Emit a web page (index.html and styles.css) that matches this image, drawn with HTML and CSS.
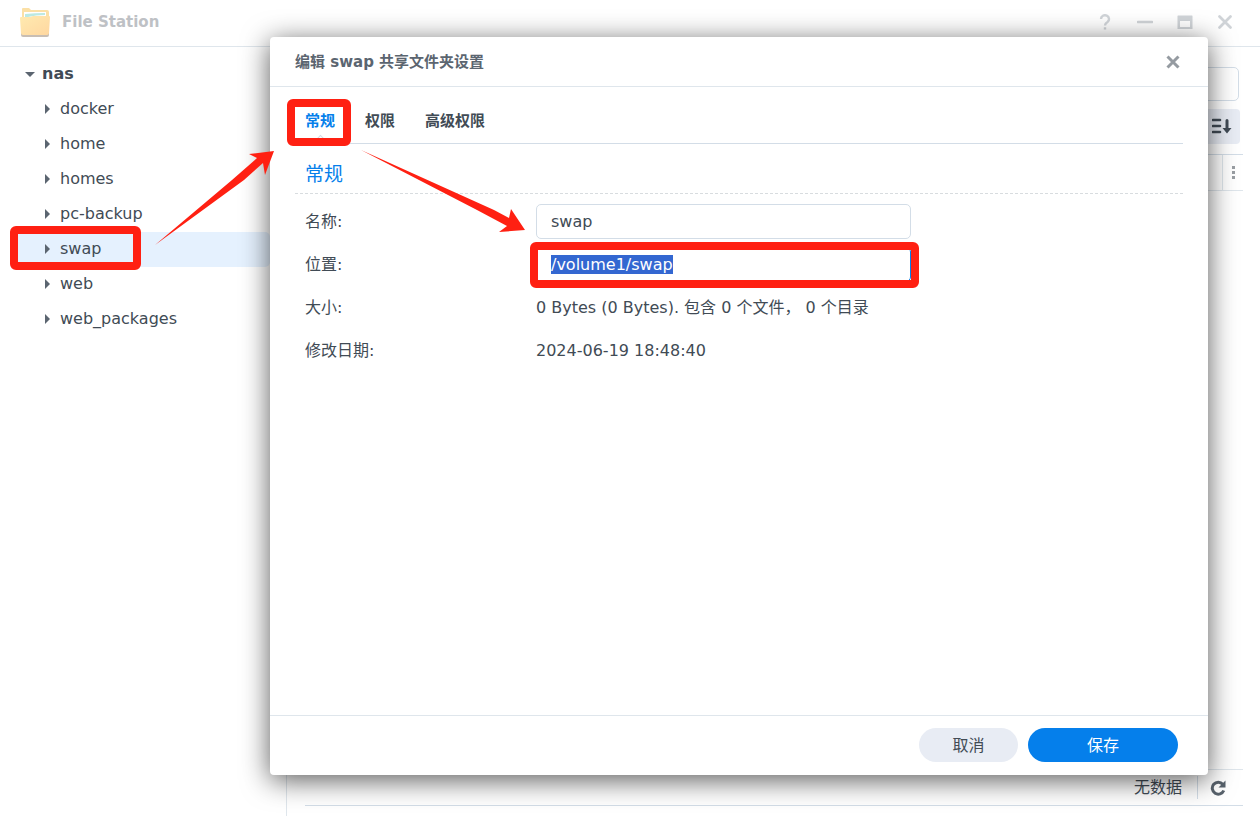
FILE: index.html
```html
<!DOCTYPE html>
<html lang="zh-CN">
<head>
    <meta charset="UTF-8">
    <meta name="viewport" content="width=device-width, initial-scale=1.0">
    <title>File Station</title>
    <link rel="stylesheet" href="styles.css">
</head>
<body>

    <header class="titlebar">
        <svg class="app-icon" width="30" height="30" viewBox="0 0 30 30" aria-hidden="true">
            <defs>
                <linearGradient id="folder" x1="0" y1="0" x2="1" y2="1">
                    <stop offset="0" stop-color="#ffeab0"/>
                    <stop offset="1" stop-color="#ffd7a0"/>
                </linearGradient>
            </defs>
            <path d="M2 2q0-1 1-1h6l2 2h16q2 0 2 2v8H2z" fill="#fbe0a6"/>
            <path d="M4 5h22v6H4z" fill="#fff"/>
            <path d="M5 7q10-1 20-1v4H5z" fill="#bce9e2"/>
            <path d="M8 10q8-2 17-2v3H8z" fill="#fff"/>
            <path d="M1 25h28v3a2 2 0 0 1-2 2H3a2 2 0 0 1-2-2z" fill="#c8beb4"/>
            <path d="M0 11q0-1 1-1h9l3-1h16q1 0 1 1l-1 16q0 2-2 2H3q-2 0-2-2z" fill="url(#folder)"/>
        </svg>
        <h1 class="app-name">File Station</h1>
        <div class="window-tools">
            <button type="button" class="tool" aria-label="帮助">
                <svg width="16" height="16" viewBox="0 0 16 16"><path d="M4 5a4 3.800 0 1 1 6.500 3Q8 9.500 8 11.500M8 13.200v2.300" fill="none" stroke="currentColor" stroke-width="2.400"/></svg>
            </button>
            <button type="button" class="tool" aria-label="最小化">
                <svg width="16" height="16" viewBox="0 0 16 16"><path d="M1 8h14" stroke="currentColor" stroke-width="2.600" stroke-linecap="round"/></svg>
            </button>
            <button type="button" class="tool" aria-label="最大化">
                <svg width="16" height="16" viewBox="0 0 16 16"><path d="M1 1.500h14q.5 0 .5.500v13H.5V2q0-.5.500-.5zM3 7v6h10V7z" fill="currentColor" fill-rule="evenodd"/></svg>
            </button>
            <button type="button" class="tool" aria-label="关闭">
                <svg width="16" height="16" viewBox="0 0 16 16"><path d="M2.500 2.500l11 11M13.500 2.500l-11 11" stroke="currentColor" stroke-width="2.800" stroke-linecap="round"/></svg>
            </button>
        </div>
    </header>

    <div class="workspace">
        <nav class="sidebar">
            <a class="node root" href="#"><span class="arrow-down"></span>nas</a>
            <a class="node" href="#"><span class="arrow-right"></span>docker</a>
            <a class="node" href="#"><span class="arrow-right"></span>home</a>
            <a class="node" href="#"><span class="arrow-right"></span>homes</a>
            <a class="node" href="#"><span class="arrow-right"></span>pc-backup</a>
            <a class="node selected" href="#"><span class="arrow-right"></span>swap</a>
            <a class="node" href="#"><span class="arrow-right"></span>web</a>
            <a class="node" href="#"><span class="arrow-right"></span>web_packages</a>
        </nav>

        <main class="content">
            <div class="toolbar">
                <input class="search" type="text" aria-label="搜索">
            </div>
            <div class="toolbar">
                <button type="button" class="sort" aria-label="排序">
                    <svg width="20" height="16" viewBox="0 0 20 16"><path d="M1 2h7M1 8h7M1 14h7" stroke="currentColor" stroke-width="2.600" stroke-linecap="round"/><path d="M13.500 2.500q0-1.500 1.500-1.500t1.500 1.500V10H19.500L15 15.500 10.500 10h3z" fill="currentColor"/></svg>
                </button>
            </div>
            <div class="list-head">
                <button type="button" class="columns" aria-label="列">
                    <svg width="3" height="13" viewBox="0 0 3 13"><path d="M0 0h3v3H0zM0 5h3v3H0zM0 10h3v3H0z" fill="#999ea3"/></svg>
                </button>
            </div>
            <div class="list"></div>
            <footer class="status">
                <span class="status-text">无数据</span>
                <button type="button" class="refresh" aria-label="刷新">
                    <svg width="16" height="16" viewBox="0 0 16 16"><path d="M12.800 4.200A6 6 0 1 0 13.800 10.500" fill="none" stroke="currentColor" stroke-width="3"/><path d="M15.500.5V7.500H8.500z" fill="currentColor"/></svg>
                </button>
            </footer>
        </main>
    </div>

    <section class="dialog" role="dialog" aria-labelledby="dialog-title">
        <div class="dialog-head">
            <h2 id="dialog-title" class="dialog-title">编辑 swap 共享文件夹设置</h2>
            <button type="button" class="close" aria-label="关闭">
                <svg width="14" height="14" viewBox="0 0 14 14"><path d="M1.500 1.500l11 11M12.500 1.500l-11 11" stroke="currentColor" stroke-width="3"/></svg>
            </button>
        </div>

        <form id="settings" class="dialog-body">
            <div class="tabs">
                <button type="button" class="tab active">常规</button>
                <button type="button" class="tab">权限</button>
                <button type="button" class="tab">高级权限</button>
            </div>
            <h3 class="section-title">常规</h3>
            <div class="fields">
                <label for="name">名称:</label>
                <input class="field" type="text" id="name" value="swap">
                <label for="location">位置:</label>
                <input class="field" type="text" id="location" value="/volume1/swap" readonly>
                <span>大小:</span>
                <span>0 Bytes (0 Bytes). 包含 0 个文件， 0 个目录</span>
                <span>修改日期:</span>
                <span>2024-06-19 18:48:40</span>
            </div>
        </form>

        <div class="dialog-foot">
            <button type="button" class="btn cancel">取消</button>
            <button type="submit" form="settings" class="btn save">保存</button>
        </div>
    </section>

    <!-- step markers -->
    <svg class="markers" aria-hidden="true">
        <g fill="none" stroke="#ff2012" stroke-width="8">
            <rect x="14" y="230" width="123" height="36" rx="2"/>
            <rect x="291" y="103" width="56" height="39" rx="2"/>
            <rect x="534" y="246" width="381" height="38" rx="2"/>
        </g>
        <g fill="#ff2012">
            <path d="M155 245L232 180L257 158L249 154L274 151L265 175L263 163L244 180z"/>
            <path d="M361 150L494 210L509 218L511 209L525 230L499 232L507 226L477 210z"/>
        </g>
    </svg>

    <script src="script.js"></script>
</body>
</html>
```

FILE: styles.css
```css
* {
    box-sizing: border-box;
}
body {
    display: flex;
    flex-direction: column;
    min-height: 100vh;
    margin: 0;
    font-family: "DejaVu Sans", "Noto Sans CJK SC", sans-serif;
    font-size: 16px;
    line-height: 24px;
    color: #414b55;
    background-color: #fff;
}
h1, h2, h3 {
    margin: 0;
}
button, input {
    font-family: inherit;
    font-size: 16px;
    color: inherit;
}
button {
    padding: 0;
    border: none;
    background: none;
    cursor: pointer;
}
svg {
    display: block;
}

/* window */
.titlebar {
    display: flex;
    align-items: center;
    height: 47px;
    padding: 0 27px 2px 20px;
    border-bottom: 1px solid #dfe6ec;
}
.app-name {
    margin-left: 12px;
    font-size: 15px;
    color: #bec1c5;
}
.window-tools {
    display: flex;
    gap: 24px;
    margin-left: auto;
    color: #d0d4d8;
}
.workspace {
    display: flex;
    flex: 1;
}
.sidebar {
    width: 287px;
    padding: 10px 16px 0 10px;
    border-right: 1px solid #dfe6ec;
}
.node {
    display: flex;
    align-items: center;
    gap: 10px;
    height: 35px;
    padding: 0 0 1px 35px;
    border-radius: 5px;
    color: inherit;
    text-decoration: none;
}
.node.root {
    gap: 7px;
    padding-left: 15px;
    font-weight: bold;
}
.node.selected {
    background-color: #e5f1fe;
}
.arrow-right {
    border-left: 5px solid #5b6570;
    border-top: 5px solid transparent;
    border-bottom: 5px solid transparent;
}
.arrow-down {
    border-top: 5px solid #5b6570;
    border-left: 5px solid transparent;
    border-right: 5px solid transparent;
}
.content {
    display: flex;
    flex: 1;
    flex-direction: column;
    padding: 20px 17px 10px 18px;
}
.toolbar {
    display: flex;
    justify-content: flex-end;
    margin-bottom: 8px;
    padding-right: 4px;
}
.search {
    width: 240px;
    height: 34px;
    border: 1px solid #d3dde7;
    border-radius: 5px;
}
.sort {
    display: flex;
    align-items: center;
    justify-content: center;
    width: 40px;
    height: 35px;
    margin-right: -1px;
    padding: 0 0 2px 3px;
    border-radius: 4px;
    background-color: #e8ecf4;
}
.list-head {
    display: flex;
    justify-content: flex-end;
    height: 37px;
    margin-top: 2px;
    border-top: 1px solid #d3dde7;
    border-bottom: 1px solid #dfe6ec;
}
.columns {
    display: flex;
    align-items: center;
    justify-content: center;
    width: 21px;
    border-left: 1px solid #dfe6ec;
}
.list {
    flex: 1;
}
.status {
    display: flex;
    align-items: center;
    justify-content: flex-end;
    height: 37px;
    border-top: 1px solid #dfe6ec;
    border-bottom: 1px solid #d3dde7;
}
.status-text {
    padding-right: 15px;
}
.refresh {
    display: flex;
    align-items: center;
    justify-content: center;
    width: 46px;
    height: 23px;
    padding-right: 6px;
    border-left: 1px solid #d3dde7;
    color: #58626c;
}

/* dialog, lies over the window */
.dialog {
    position: absolute;
    top: 37px;
    right: 52px;
    bottom: 41px;
    left: 270px;
    display: flex;
    flex-direction: column;
    border-radius: 4px;
    background-color: #fff;
    box-shadow: 0 5px 28px rgba(0, 0, 0, 0.65);
}
.dialog-head {
    display: flex;
    align-items: center;
    justify-content: space-between;
    height: 50px;
    padding: 0 28px 0 25px;
    border-bottom: 1px solid #dfe6ec;
}
.dialog-title {
    font-size: 15px;
    color: #5b6570;
}
.close {
    color: #959ba1;
}
.dialog-body {
    flex: 1;
    padding: 0 25px;
}
.tabs {
    display: flex;
    gap: 30px;
    height: 57px;
    padding: 0 10px;
    border-bottom: 1px solid #d3dde7;
}
.tab {
    position: relative;
    padding-top: 8px;
    font-size: 15px;
    font-weight: bold;
}
.tab.active {
    color: #057feb;
}
/* notch that rises from the tab line */
.tab.active::after {
    content: "";
    position: absolute;
    bottom: -5px;
    left: 50%;
    width: 10px;
    height: 10px;
    margin-left: -5px;
    border-top: 1px solid #d3dde7;
    border-left: 1px solid #d3dde7;
    background-color: #fff;
    transform: rotate(45deg);
}
.section-title {
    height: 50px;
    padding: 16px 10px 0;
    border-bottom: 1px dashed #d8dcdf;
    font-size: 19px;
    line-height: 28px;
    font-weight: normal;
    color: #057feb;
}
.fields {
    display: grid;
    grid-template-columns: 231px 1fr;
    grid-auto-rows: 35px;
    align-items: center;
    gap: 8px 0;
    padding: 10px 10px 0;
}
.field {
    width: 375px;
    max-width: 100%;
    height: 35px;
    padding: 0 14px;
    border: 1px solid #d3dde7;
    border-radius: 5px;
    background-color: #fff;
}
.field:focus {
    border-color: #057feb;
    outline: none;
}
.field::selection {
    color: #fff;
    background-color: #3367d1;
}
.dialog-foot {
    display: flex;
    align-items: center;
    justify-content: flex-end;
    gap: 10px;
    height: 60px;
    padding: 0 30px 2px;
    border-top: 1px solid #dfe6ec;
}
.btn {
    height: 34px;
    padding-bottom: 2px;
    border-radius: 17px;
}
.cancel {
    width: 99px;
    background-color: #e8ecf4;
}
.save {
    width: 150px;
    color: #fff;
    background-color: #057feb;
}

.markers {
    position: absolute;
    top: 0;
    left: 0;
    width: 100%;
    height: 100%;
    pointer-events: none;
}
```

FILE: script.js
```js
const locationField = document.getElementById('location');
locationField.focus();
locationField.select();
```
